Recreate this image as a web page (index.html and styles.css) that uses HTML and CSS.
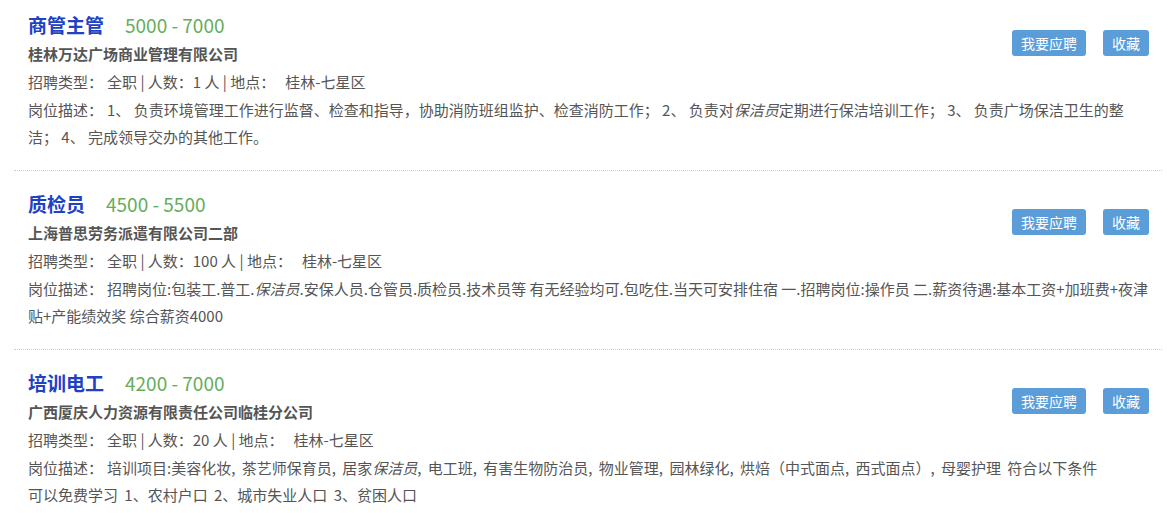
FILE: index.html
```html
<!DOCTYPE html>
<html lang="zh-CN">

<head>
    <meta charset="UTF-8">
    <meta name="viewport" content="width=device-width, initial-scale=1.0">
    <title>职位列表</title>
    <link rel="stylesheet" href="styles.css">
</head>

<body>
    <ul class="job-list">
        <li class="job">
            <div class="job-top">
                <div class="job-info">
                    <h3 class="job-title">商管主管<span class="salary">5000 - 7000</span></h3>
                    <p class="company">桂林万达广场商业管理有限公司</p>
                    <p class="meta"><span class="label">招聘类型：</span>全职 | 人数：1 人 | 地点：<span class="gap"></span>桂林-七星区</p>
                </div>
                <div class="job-btns">
                    <button class="btn">我要应聘</button>
                    <button class="btn">收藏</button>
                </div>
            </div>
            <p class="desc"><span class="label">岗位描述：</span>1、 负责环境管理工作进行监督、检查和指导，协助消防班组监护、检查消防工作； 2、 负责对<em>保洁员</em>定期进行保洁培训工作； 3、 负责广场保洁卫生的整洁； 4、 完成领导交办的其他工作。</p>
        </li>
        <li class="job">
            <div class="job-top">
                <div class="job-info">
                    <h3 class="job-title">质检员<span class="salary">4500 - 5500</span></h3>
                    <p class="company">上海普思劳务派遣有限公司二部</p>
                    <p class="meta"><span class="label">招聘类型：</span>全职 | 人数：100 人 | 地点：<span class="gap"></span>桂林-七星区</p>
                </div>
                <div class="job-btns">
                    <button class="btn">我要应聘</button>
                    <button class="btn">收藏</button>
                </div>
            </div>
            <p class="desc"><span class="label">岗位描述：</span>招聘岗位:包装工.普工.<em>保洁员</em>.安保人员.仓管员.质检员.技术员等 有无经验均可.包吃住.当天可安排住宿 一.招聘岗位:操作员 二.薪资待遇:基本工资+加班费+夜津贴+产能绩效奖 综合薪资4000</p>
        </li>
        <li class="job">
            <div class="job-top">
                <div class="job-info">
                    <h3 class="job-title">培训电工<span class="salary">4200 - 7000</span></h3>
                    <p class="company">广西厦庆人力资源有限责任公司临桂分公司</p>
                    <p class="meta"><span class="label">招聘类型：</span>全职 | 人数：20 人 | 地点：<span class="gap"></span>桂林-七星区</p>
                </div>
                <div class="job-btns">
                    <button class="btn">我要应聘</button>
                    <button class="btn">收藏</button>
                </div>
            </div>
            <p class="desc desc-loose"><span class="label">岗位描述：</span>培训项目:美容化妆, 茶艺师保育员, 居家<em>保洁员</em>, 电工班, 有害生物防治员, 物业管理, 园林绿化, 烘焙（中式面点, 西式面点）, 母婴护理 符合以下条件<br>可以免费学习 1、农村户口 2、城市失业人口 3、贫困人口</p>
        </li>
    </ul>
</body>

</html>
```

FILE: styles.css
```css
* {
    box-sizing: border-box;
}

body {
    margin: 0;
    background: #fff;
    font-family: "Noto Sans CJK SC", "Microsoft YaHei", sans-serif;
    color: #555;
}

.job-list {
    list-style: none;
    margin: 0 10px 0 14px;
    padding: 0;
}

.job {
    padding: 18px 12px 20px 14px;
    border-bottom: 1px dotted #ccc;
}

.job:first-child {
    padding-top: 10px;
}

.job:last-child {
    border-bottom: none;
}

.job-top {
    display: flex;
    align-items: flex-start;
}

.job-info {
    flex: 1;
}

.job-btns {
    display: flex;
    gap: 17px;
    margin-top: 20px;
    margin-right: 1px;
}

.btn {
    height: 26px;
    padding: 0 9px;
    border: none;
    border-radius: 3px;
    background: #5b9dd9;
    color: #fff;
    font-family: inherit;
    font-size: 14px;
    line-height: 26px;
    cursor: pointer;
}

.job-title {
    margin: 0;
    height: 30px;
    line-height: 30px;
    font-size: 19px;
    font-weight: bold;
    color: #2141c4;
}

.salary {
    margin-left: 21px;
    font-size: 19px;
    font-weight: normal;
    color: #66ad5b;
}

.company {
    margin: 0;
    line-height: 28px;
    font-size: 15px;
    font-weight: bold;
    color: #555;
}

.meta {
    margin: 0;
    line-height: 28px;
    font-size: 15px;
}

.desc {
    margin: 0;
    line-height: 27px;
    font-size: 15px;
}

.desc-loose {
    word-spacing: 3px;
}

.label {
    display: inline-block;
    margin-right: 4px;
}

.gap {
    display: inline-block;
    width: 10px;
}

.desc em {
    font-style: italic;
}
```
